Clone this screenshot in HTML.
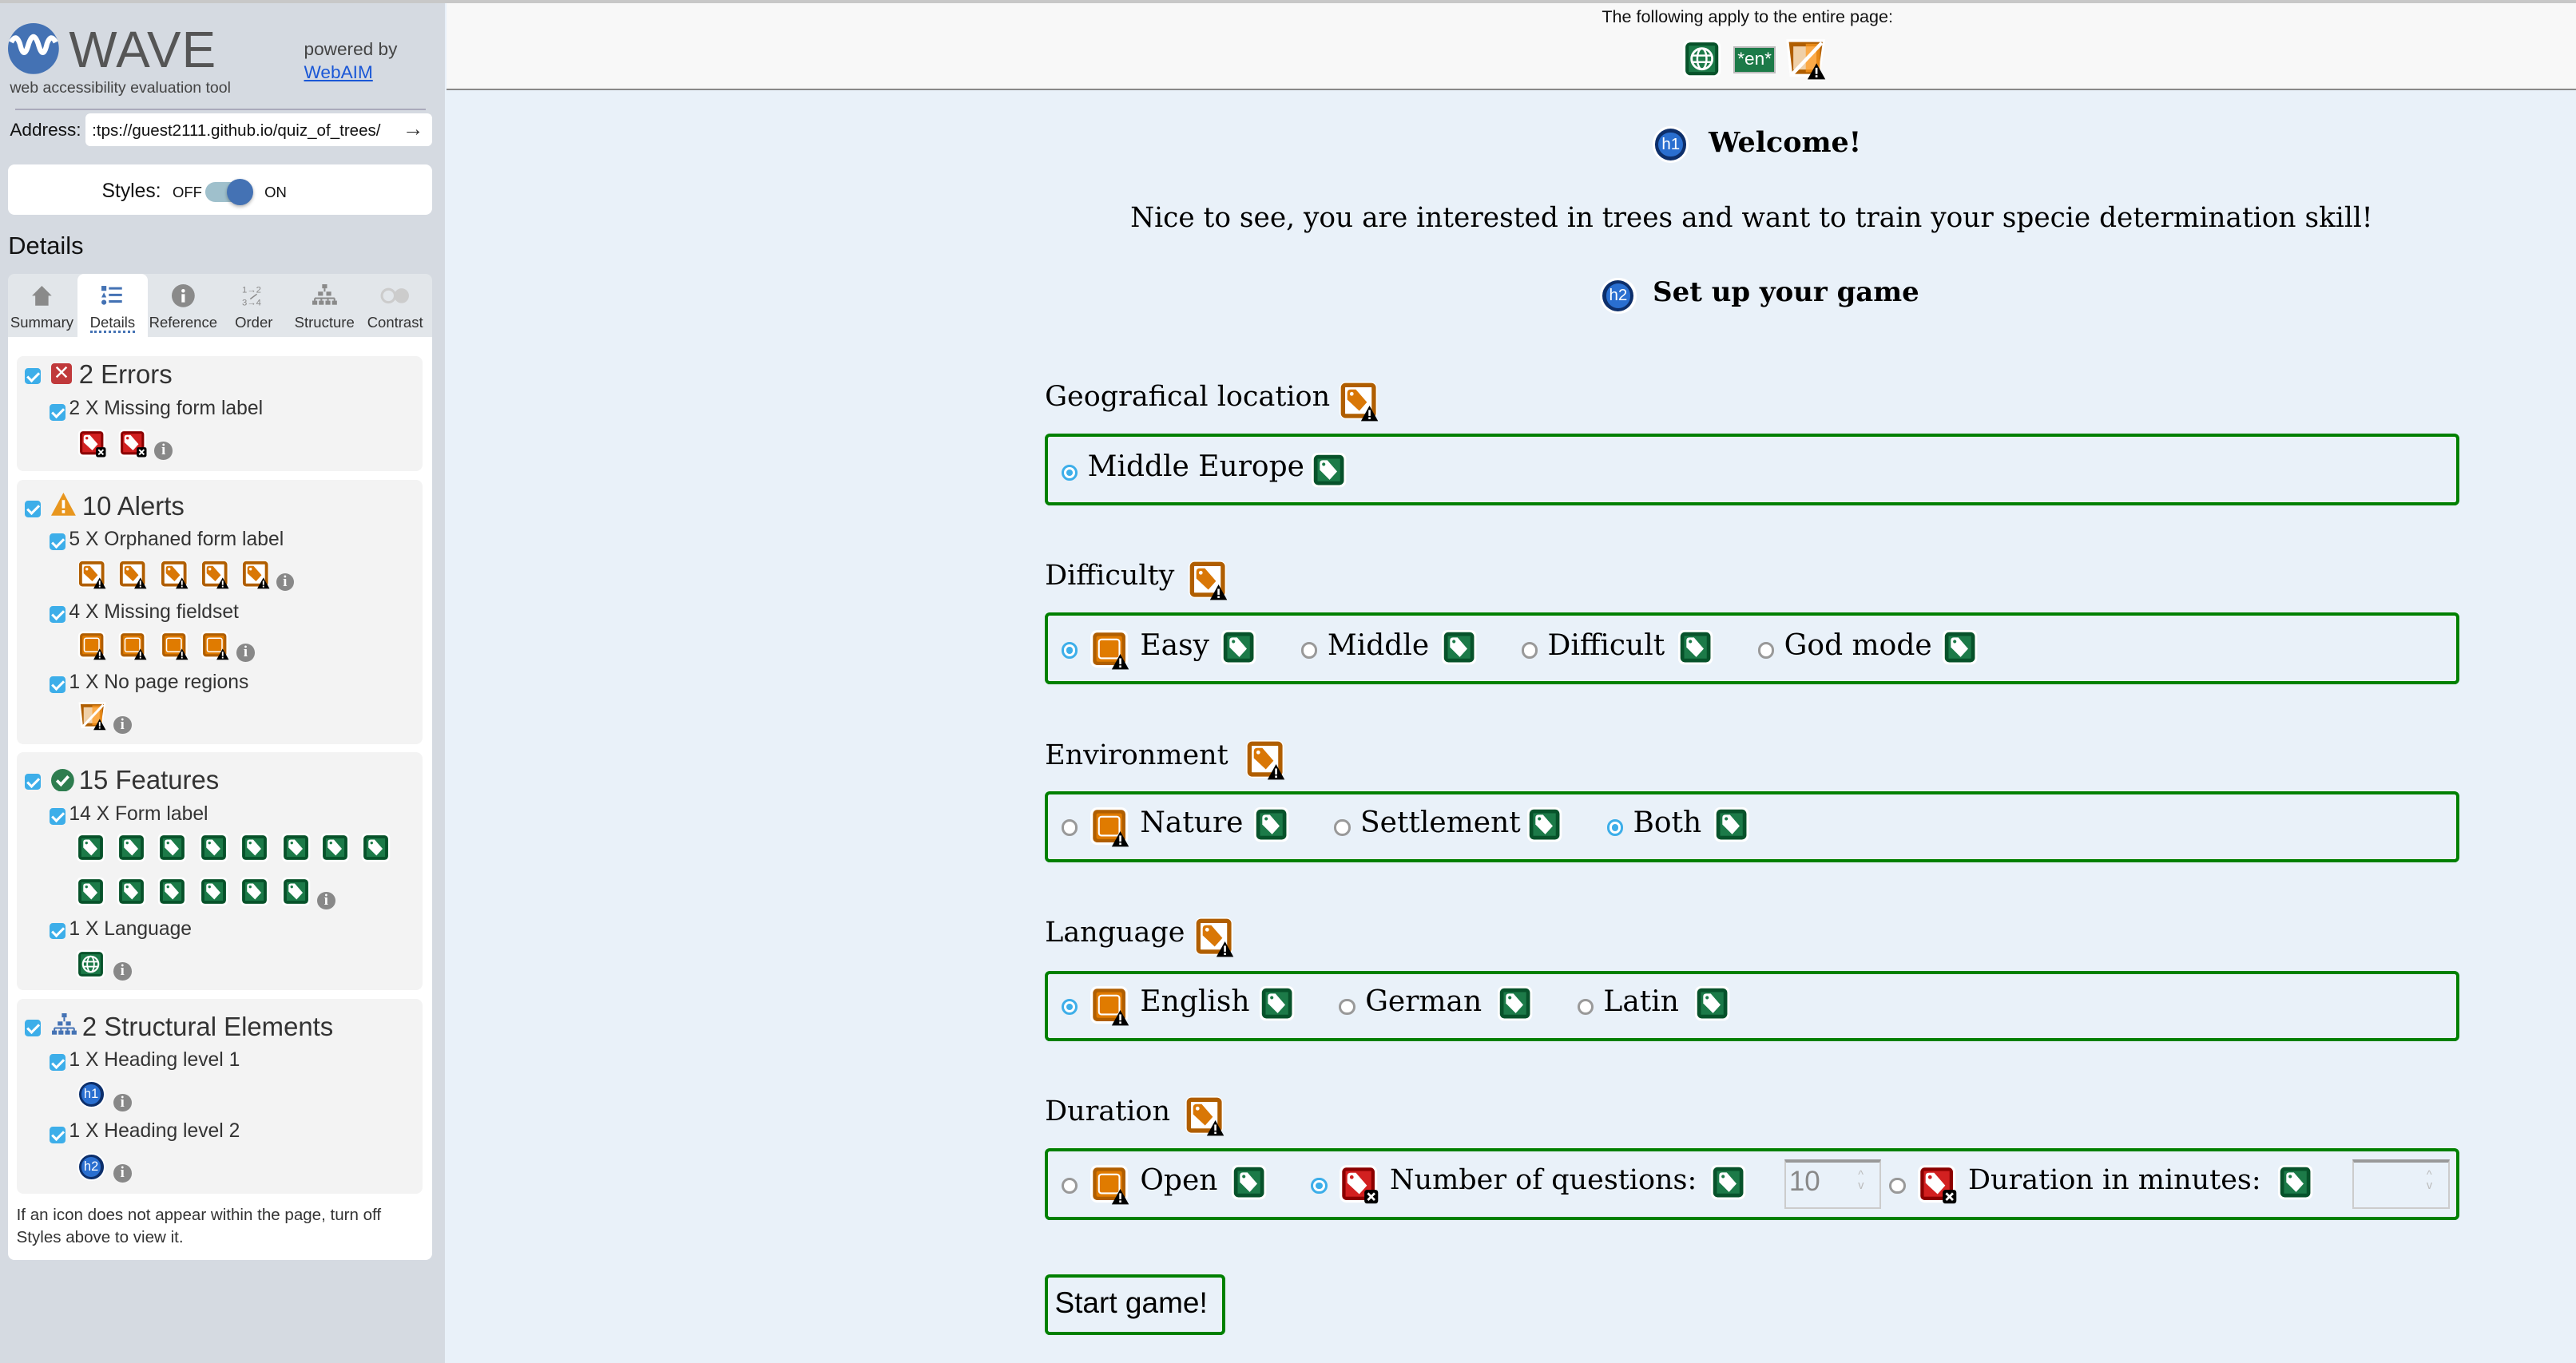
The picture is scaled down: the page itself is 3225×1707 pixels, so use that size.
<!DOCTYPE html>
<html><head><meta charset="utf-8">
<style>
html,body{margin:0;padding:0;}
body{width:1568px;height:830px;zoom:2.0568;overflow:hidden;position:relative;background:#e9f1f9;font-family:"Liberation Sans",sans-serif;}
.a{position:absolute;white-space:nowrap;}
#side{position:absolute;left:0;top:0;width:271px;height:830px;background:#d5dae1;}
#top{position:absolute;left:272px;top:2px;width:1296px;height:52px;background:#f8f8f8;border-bottom:1px solid #888;}
.cb{position:absolute;width:10px;height:10px;background:#3daee9;border-radius:2px;}
.cb:after{content:"";position:absolute;left:3px;top:1px;width:3px;height:6px;border:solid #fff;border-width:0 1.5px 1.5px 0;transform:rotate(45deg);}
.sec{position:absolute;left:10px;width:247px;background:#f3f3f3;border-radius:4px;}
.h{font-size:16px;color:#333;}
.s{font-size:12px;color:#333;}
.ic{position:absolute;width:18px;height:18px;}
.ib{position:absolute;width:22px;height:22px;}
.inf{position:absolute;width:11px;height:11px;border-radius:50%;background:#888;color:#fff;font:bold 9px "Liberation Serif",serif;text-align:center;line-height:11px;}
.ser{font-family:"DejaVu Serif",serif;color:#000;}
.lab{font-size:17px;}
.fs{position:absolute;left:636px;width:857px;border:2px solid #008000;border-radius:3px;}
.r{position:absolute;width:7px;height:7px;border:1.5px solid #999;border-radius:50%;background:#fff;}
.r.on{border-color:#3daee9;}
.r.on:after{content:"";position:absolute;left:1.5px;top:1.5px;width:4px;height:4px;border-radius:50%;background:#3daee9;}
.opt{font-size:17.5px;font-family:"DejaVu Serif",serif;}
.tab{position:absolute;top:167px;width:43px;height:38px;text-align:center;font-size:9px;color:#333;}
.tab svg{display:block;margin:6px auto 0;}
.tab .t{display:block;margin-top:4px;}
</style></head><body>
<svg width="0" height="0" style="position:absolute">
<defs>
<symbol id="tg" viewBox="0 0 24 24"><rect x="0.5" y="0.5" width="23" height="23" rx="4" fill="#fff"/><rect x="2" y="2" width="20" height="20" rx="3" fill="#07522a"/><rect x="4.5" y="4.5" width="15" height="15" fill="#1c7a48"/><path d="M6 7.5 Q6 5.5 8 5.5 H11 L17.5 13 L12.5 18.5 L6 12 Z" fill="#fff"/><circle cx="8.6" cy="8.2" r="1.1" fill="#1c7a48"/></symbol>
<symbol id="to" viewBox="0 0 24 24"><rect x="0.5" y="0.5" width="22" height="22" rx="4" fill="#fff"/><rect x="2.5" y="2.5" width="18" height="18" rx="1.5" fill="#fff" stroke="#b05e00" stroke-width="2.5"/><path d="M5 7 Q5 5 7 5 H10 L16.5 12.5 L12 17.5 L5 11 Z" fill="#d97706"/><circle cx="7.6" cy="7.6" r="1.1" fill="#fff"/><path d="M18 14.5 L23 23.5 H13 Z" fill="#000"/><rect x="17.4" y="17" width="1.2" height="3.5" fill="#fff"/><rect x="17.4" y="21.2" width="1.2" height="1.2" fill="#fff"/></symbol>
<symbol id="fo" viewBox="0 0 24 24"><rect x="0.5" y="0.5" width="22" height="22" rx="4" fill="#fff"/><rect x="2" y="2" width="19" height="19" rx="2.5" fill="#b05e00"/><rect x="4" y="4" width="15" height="15" rx="1" fill="#e07b00"/><rect x="5.5" y="6" width="12" height="11" rx="1.5" fill="none" stroke="#fff" stroke-width="1"/><path d="M18 14.5 L23 23.5 H13 Z" fill="#000"/><rect x="17.4" y="17" width="1.2" height="3.5" fill="#fff"/><rect x="17.4" y="21.2" width="1.2" height="1.2" fill="#fff"/></symbol>
<symbol id="tr" viewBox="0 0 24 24"><rect x="0.5" y="0.5" width="22" height="22" rx="4" fill="#fff"/><rect x="2" y="2" width="19" height="19" rx="2.5" fill="#8b0000"/><rect x="4" y="4" width="15" height="15" fill="#d22020"/><path d="M5 7 Q5 5 7 5 H10 L16.5 12.5 L12 17.5 L5 11 Z" fill="#fff"/><circle cx="7.6" cy="7.6" r="1.1" fill="#d22020"/><rect x="15" y="15" width="8" height="8" rx="1.5" fill="#000"/><path d="M17 17 L21 21 M21 17 L17 21" stroke="#fff" stroke-width="1.3"/></symbol>
<symbol id="rg" viewBox="0 0 24 24"><path d="M1 1 H23 L20 22 H3 Z" fill="#fff"/><path d="M2.5 2.5 H21.5 L19 20.5 H4.5 Z" fill="#b05e00"/><rect x="5" y="5" width="13" height="13" fill="#f0d0a8"/><rect x="12" y="3.5" width="8" height="16" fill="#ff9a20" opacity=".7"/><path d="M21 3 L4 21" stroke="#fff" stroke-width="2"/><path d="M18 14.5 L23 23.5 H13 Z" fill="#000"/><rect x="17.4" y="17" width="1.2" height="3.5" fill="#fff"/><rect x="17.4" y="21.2" width="1.2" height="1.2" fill="#fff"/></symbol>
<symbol id="gl" viewBox="0 0 24 24"><rect x="0.5" y="0.5" width="23" height="23" rx="4" fill="#fff"/><rect x="2" y="2" width="20" height="20" rx="3" fill="#07522a"/><rect x="4" y="4" width="16" height="16" fill="#1c7a48"/><circle cx="12" cy="12" r="6.3" fill="none" stroke="#fff" stroke-width="1.4"/><ellipse cx="12" cy="12" rx="2.8" ry="6.3" fill="none" stroke="#fff" stroke-width="1.2"/><path d="M5.8 10 H18.2 M5.8 14 H18.2" stroke="#fff" stroke-width="1.2"/></symbol>
</defs></svg>

<div id="side">
  <svg class="a" style="left:5px;top:14px" width="31" height="31" viewBox="0 0 32 32"><circle cx="16" cy="16" r="16" fill="#4472b4"/><path d="M2 12 Q5 6 7.5 13 Q10 24 13 13 Q16 4 19 13 Q22 24 24.5 13 Q27 6 30 12" fill="none" stroke="#fff" stroke-width="3.2"/></svg>
  <div class="a" style="left:42px;top:12px;font-size:31px;color:#555;letter-spacing:0.5px;font-weight:300">WAVE</div>
  <div class="a" style="left:6px;top:48px;font-size:9.5px;color:#444">web accessibility evaluation tool</div>
  <div class="a" style="left:185px;top:24px;font-size:11px;color:#444">powered by</div>
  <div class="a" style="left:185px;top:38px;font-size:11px;color:#1a57d6;text-decoration:underline">WebAIM</div>
  <div class="a" style="left:9px;top:66px;width:500px;height:1px;background:#aab;transform-origin:0 0;transform:scaleX(.5)"></div>
  <div class="a" style="left:6px;top:73px;font-size:11px;color:#111">Address:</div>
  <div class="a" style="left:52px;top:69px;width:211px;height:20px;background:#fff;border-radius:3px"></div>
  <div class="a" style="left:56px;top:74px;font-size:10px;color:#111">:tps://guest2111.github.io/quiz_of_trees/</div>
  <div class="a" style="left:245px;top:71px;font-size:13px;color:#333">→</div>
  <div class="a" style="left:5px;top:100px;width:258px;height:31px;background:#fff;border-radius:4px"></div>
  <div class="a" style="left:62px;top:110px;font-size:12px;color:#111">Styles:</div>
  <div class="a" style="left:105px;top:112px;font-size:9px;color:#111">OFF</div>
  <div class="a" style="left:125px;top:111px;width:28px;height:12px;background:#9fc0cc;border-radius:6px"></div>
  <div class="a" style="left:138px;top:109px;width:16px;height:16px;background:#4472b4;border-radius:50%;box-shadow:0 1px 2px rgba(0,0,0,.3)"></div>
  <div class="a" style="left:161px;top:112px;font-size:9px;color:#111">ON</div>
  <div class="a" style="left:5px;top:141px;font-size:15px;color:#111">Details</div>
  <div class="a" style="left:5px;top:167px;width:258px;height:38px;background:#e2e6ea;border-radius:4px 4px 0 0"></div>
  <div class="a" style="left:47px;top:167px;width:43px;height:38px;background:#fff;border-radius:4px 4px 0 0"></div>
  <div class="tab" style="left:4px"><svg width="14" height="14" viewBox="0 0 14 14"><path d="M7 1 L13 7 H11 V13 H3 V7 H1Z" fill="#8a8a8a"/></svg><span class="t">Summary</span></div>
  <div class="tab" style="left:47px"><svg width="14" height="14" viewBox="0 0 14 14"><rect x="0.5" y="1" width="3" height="3" fill="#4472b4"/><path d="M2 5 L3.5 8 H0.5Z" fill="#4472b4"/><circle cx="2" cy="11" r="1.5" fill="#4472b4"/><path d="M5 2.5H13M5 6.5H13M5 10.5H13" stroke="#4472b4" stroke-width="1.5"/></svg><span class="t"><span style="border-bottom:1.5px dotted #4472b4">Details</span></span></div>
  <div class="tab" style="left:90px"><svg width="14" height="14" viewBox="0 0 14 14"><circle cx="7" cy="7" r="7" fill="#8a8a8a"/><rect x="6" y="6" width="2" height="5" fill="#fff"/><circle cx="7" cy="4" r="1.1" fill="#fff"/></svg><span class="t">Reference</span></div>
  <div class="tab" style="left:133px"><svg width="16" height="14" viewBox="0 0 16 14"><text x="1" y="5" font-size="5.5" fill="#888" font-family="Liberation Sans">1→2</text><path d="M10 6 L6 9" stroke="#888" stroke-width=".7"/><text x="1" y="13" font-size="5.5" fill="#888" font-family="Liberation Sans">3→4</text></svg><span class="t">Order</span></div>
  <div class="tab" style="left:176px"><svg width="15" height="14" viewBox="0 0 15 14"><g fill="#8a8a8a"><rect x="6" y="0" width="3" height="2.5"/><rect x="3.5" y="4.5" width="3" height="2.5"/><rect x="8.5" y="4.5" width="3" height="2.5"/><rect x="0" y="10" width="3" height="2.5"/><rect x="4" y="10" width="3" height="2.5"/><rect x="8" y="10" width="3" height="2.5"/><rect x="12" y="10" width="3" height="2.5"/></g><path d="M7.5 2.5V4.5M1.5 8.5H13.5M1.5 8.5V10M13.5 8.5V10M5.5 8.5V10M9.5 8.5V10" stroke="#8a8a8a"/></svg><span class="t">Structure</span></div>
  <div class="tab" style="left:219px"><svg width="18" height="14" viewBox="0 0 18 14"><circle cx="5" cy="7" r="4" fill="none" stroke="#ccc" stroke-width="1.5"/><circle cx="13" cy="7" r="4.5" fill="#ccc"/></svg><span class="t">Contrast</span></div>

  <div class="a" style="left:5px;top:205px;width:258px;height:562px;background:#fff;border-radius:0 0 4px 4px"></div>

  <div class="sec" style="top:217px;height:70px"></div>
  <div class="cb" style="left:15px;top:224px"></div>
  <div class="a" style="left:31px;top:221px;width:13px;height:13px;background:#c0393b;border-radius:2px;color:#fff;font-size:12px;text-align:center;line-height:13px">✕</div>
  <div class="a h" style="left:48px;top:219px">2 Errors</div>
  <div class="cb" style="left:30px;top:246px"></div>
  <div class="a s" style="left:42px;top:242px">2 X Missing form label</div>
  <svg class="ic" style="left:47px;top:261px"><use href="#tr"/></svg>
  <svg class="ic" style="left:72px;top:261px"><use href="#tr"/></svg>
  <div class="inf" style="left:94px;top:269px">i</div>

  <div class="sec" style="top:292px;height:161px"></div>
  <div class="cb" style="left:15px;top:305px"></div>
  <svg class="a" style="left:31px;top:300px" width="15" height="14" viewBox="0 0 15 14"><path d="M7.5 0 L15 14 H0Z" fill="#e8961e"/><rect x="6.6" y="4.5" width="1.8" height="5" fill="#fff"/><rect x="6.6" y="10.7" width="1.8" height="1.8" fill="#fff"/></svg>
  <div class="a h" style="left:50px;top:299px">10 Alerts</div>
  <div class="cb" style="left:30px;top:325px"></div>
  <div class="a s" style="left:42px;top:322px">5 X Orphaned form label</div>
  <svg class="ic" style="left:47px;top:341px"><use href="#to"/></svg>
  <svg class="ic" style="left:72px;top:341px"><use href="#to"/></svg>
  <svg class="ic" style="left:97px;top:341px"><use href="#to"/></svg>
  <svg class="ic" style="left:122px;top:341px"><use href="#to"/></svg>
  <svg class="ic" style="left:147px;top:341px"><use href="#to"/></svg>
  <div class="inf" style="left:168px;top:349px">i</div>
  <div class="cb" style="left:30px;top:369px"></div>
  <div class="a s" style="left:42px;top:366px">4 X Missing fieldset</div>
  <svg class="ic" style="left:47px;top:384px"><use href="#fo"/></svg>
  <svg class="ic" style="left:72px;top:384px"><use href="#fo"/></svg>
  <svg class="ic" style="left:97px;top:384px"><use href="#fo"/></svg>
  <svg class="ic" style="left:122px;top:384px"><use href="#fo"/></svg>
  <div class="inf" style="left:144px;top:392px">i</div>
  <div class="cb" style="left:30px;top:412px"></div>
  <div class="a s" style="left:42px;top:409px">1 X No page regions</div>
  <svg class="ic" style="left:47px;top:427px"><use href="#rg"/></svg>
  <div class="inf" style="left:69px;top:436px">i</div>

  <div class="sec" style="top:458px;height:145px"></div>
  <div class="cb" style="left:15px;top:471px"></div>
  <svg class="a" style="left:31px;top:468px" width="14" height="14" viewBox="0 0 14 14"><circle cx="7" cy="7" r="7" fill="#2e7d4f"/><path d="M3.5 7 L6 9.5 L10.5 4.5" fill="none" stroke="#fff" stroke-width="1.8"/></svg>
  <div class="a h" style="left:48px;top:466px">15 Features</div>
  <div class="cb" style="left:30px;top:492px"></div>
  <div class="a s" style="left:42px;top:489px">14 X Form label</div>
  <svg class="ic" style="left:46px;top:507px"><use href="#tg"/></svg>
  <svg class="ic" style="left:71px;top:507px"><use href="#tg"/></svg>
  <svg class="ic" style="left:96px;top:507px"><use href="#tg"/></svg>
  <svg class="ic" style="left:121px;top:507px"><use href="#tg"/></svg>
  <svg class="ic" style="left:146px;top:507px"><use href="#tg"/></svg>
  <svg class="ic" style="left:171px;top:507px"><use href="#tg"/></svg>
  <svg class="ic" style="left:195px;top:507px"><use href="#tg"/></svg>
  <svg class="ic" style="left:220px;top:507px"><use href="#tg"/></svg>
  <svg class="ic" style="left:46px;top:534px"><use href="#tg"/></svg>
  <svg class="ic" style="left:71px;top:534px"><use href="#tg"/></svg>
  <svg class="ic" style="left:96px;top:534px"><use href="#tg"/></svg>
  <svg class="ic" style="left:121px;top:534px"><use href="#tg"/></svg>
  <svg class="ic" style="left:146px;top:534px"><use href="#tg"/></svg>
  <svg class="ic" style="left:171px;top:534px"><use href="#tg"/></svg>
  <div class="inf" style="left:193px;top:543px">i</div>
  <div class="cb" style="left:30px;top:562px"></div>
  <div class="a s" style="left:42px;top:559px">1 X Language</div>
  <svg class="ic" style="left:46px;top:578px"><use href="#gl"/></svg>
  <div class="inf" style="left:69px;top:586px">i</div>

  <div class="sec" style="top:608px;height:119px"></div>
  <div class="cb" style="left:15px;top:621px"></div>
  <svg class="a" style="left:31px;top:617px" width="16" height="14" viewBox="0 0 15 14"><g fill="#4472b4"><rect x="6" y="0" width="3" height="2.5"/><rect x="3.5" y="5" width="3" height="2.5"/><rect x="8.5" y="5" width="3" height="2.5"/><rect x="0" y="10.5" width="3" height="2.5"/><rect x="4" y="10.5" width="3" height="2.5"/><rect x="8" y="10.5" width="3" height="2.5"/><rect x="12" y="10.5" width="3" height="2.5"/></g><path d="M7.5 2.5V5M1.5 9H13.5M1.5 9V10.5M13.5 9V10.5M5.5 9V10.5M9.5 9V10.5" stroke="#4472b4"/></svg>
  <div class="a h" style="left:50px;top:616px">2 Structural Elements</div>
  <div class="cb" style="left:30px;top:642px"></div>
  <div class="a s" style="left:42px;top:639px">1 X Heading level 1</div>
  <div class="a" style="left:47px;top:658px;width:15px;height:15px;border-radius:50%;background:#0d2f6b;border:1px solid #fff"><div style="margin:1.5px;width:12px;height:12px;border-radius:50%;background:#2a6fd0;color:#fff;font-size:8px;text-align:center;line-height:12px">h1</div></div>
  <div class="inf" style="left:69px;top:666px">i</div>
  <div class="cb" style="left:30px;top:686px"></div>
  <div class="a s" style="left:42px;top:682px">1 X Heading level 2</div>
  <div class="a" style="left:47px;top:702px;width:15px;height:15px;border-radius:50%;background:#0d2f6b;border:1px solid #fff"><div style="margin:1.5px;width:12px;height:12px;border-radius:50%;background:#2a6fd0;color:#fff;font-size:8px;text-align:center;line-height:12px">h2</div></div>
  <div class="inf" style="left:69px;top:709px">i</div>
  <div class="a" style="left:10px;top:733px;font-size:10px;color:#333;line-height:14px;white-space:normal;width:250px">If an icon does not appear within the page, turn off Styles above to view it.</div>
</div>

<div class="a" style="left:0;top:0;width:1568px;height:2px;background:#c8c8c8"></div>
<div id="top"></div>
<div class="a" style="left:975px;top:4px;font-size:10.5px;color:#111">The following apply to the entire page:</div>
<svg class="ib" style="left:1024px;top:24px;width:24px;height:24px"><use href="#gl"/></svg>
<div class="a" style="left:1055px;top:28px;width:24px;height:15px;background:#1c7a48;border:1px solid #bbb;color:#fff;font-size:11px;text-align:center;line-height:14px">*en*</div>
<svg class="ib" style="left:1086px;top:23px;width:26px;height:26px"><use href="#rg"/></svg>

<div class="a" style="left:1006px;top:77px;width:22px;height:22px;border-radius:50%;background:#fff"><div style="margin:1.5px;width:19px;height:19px;border-radius:50%;background:#0d2f6b"><div style="position:relative;top:2px;left:2px;width:15px;height:15px;border-radius:50%;background:#2a6fd0;color:#fff;font-size:10px;text-align:center;line-height:15px">h1</div></div></div>
<div class="a ser" style="left:1040px;top:77px;font-size:17px;font-weight:bold">Welcome!</div>
<div class="a ser" style="left:688px;top:123px;font-size:16.7px">Nice to see, you are interested in trees and want to train your specie determination skill!</div>
<div class="a" style="left:974px;top:169px;width:22px;height:22px;border-radius:50%;background:#fff"><div style="margin:1.5px;width:19px;height:19px;border-radius:50%;background:#0d2f6b"><div style="position:relative;top:2px;left:2px;width:15px;height:15px;border-radius:50%;background:#2a6fd0;color:#fff;font-size:10px;text-align:center;line-height:15px">h2</div></div></div>
<div class="a ser" style="left:1006px;top:168px;font-size:16.5px;font-weight:bold">Set up your game</div>

<div class="a ser lab" style="left:636px;top:232px">Geografical location</div>
<svg class="ib" style="left:815px;top:232px;width:25px;height:25px"><use href="#to"/></svg>
<div class="fs" style="top:264px;height:40px"></div>
<div class="r on" style="left:646px;top:283px"></div>
<div class="a opt" style="left:662px;top:274px">Middle Europe</div>
<svg class="ib" style="left:798px;top:275px"><use href="#tg"/></svg>

<div class="a ser lab" style="left:636px;top:341px">Difficulty</div>
<svg class="ib" style="left:723px;top:341px;width:25px;height:25px"><use href="#to"/></svg>
<div class="fs" style="top:373px;height:40px"></div>
<div class="r on" style="left:646px;top:391px"></div>
<svg class="ib" style="left:663px;top:383px;width:25px;height:25px"><use href="#fo"/></svg>
<div class="a opt" style="left:694px;top:383px">Easy</div>
<svg class="ib" style="left:743px;top:383px"><use href="#tg"/></svg>
<div class="r" style="left:792px;top:391px"></div>
<div class="a opt" style="left:808px;top:383px">Middle</div>
<svg class="ib" style="left:877px;top:383px"><use href="#tg"/></svg>
<div class="r" style="left:926px;top:391px"></div>
<div class="a opt" style="left:942px;top:383px">Difficult</div>
<svg class="ib" style="left:1021px;top:383px"><use href="#tg"/></svg>
<div class="r" style="left:1070px;top:391px"></div>
<div class="a opt" style="left:1086px;top:383px">God mode</div>
<svg class="ib" style="left:1182px;top:383px"><use href="#tg"/></svg>

<div class="a ser lab" style="left:636px;top:450px">Environment</div>
<svg class="ib" style="left:758px;top:450px;width:25px;height:25px"><use href="#to"/></svg>
<div class="fs" style="top:482px;height:39px"></div>
<div class="r" style="left:646px;top:499px"></div>
<svg class="ib" style="left:663px;top:491px;width:25px;height:25px"><use href="#fo"/></svg>
<div class="a opt" style="left:694px;top:491px">Nature</div>
<svg class="ib" style="left:763px;top:491px"><use href="#tg"/></svg>
<div class="r" style="left:812px;top:499px"></div>
<div class="a opt" style="left:828px;top:491px">Settlement</div>
<svg class="ib" style="left:929px;top:491px"><use href="#tg"/></svg>
<div class="r on" style="left:978px;top:499px"></div>
<div class="a opt" style="left:994px;top:491px">Both</div>
<svg class="ib" style="left:1043px;top:491px"><use href="#tg"/></svg>

<div class="a ser lab" style="left:636px;top:558px">Language</div>
<svg class="ib" style="left:727px;top:558px;width:25px;height:25px"><use href="#to"/></svg>
<div class="fs" style="top:591px;height:39px"></div>
<div class="r on" style="left:646px;top:608px"></div>
<svg class="ib" style="left:663px;top:600px;width:25px;height:25px"><use href="#fo"/></svg>
<div class="a opt" style="left:694px;top:600px">English</div>
<svg class="ib" style="left:766px;top:600px"><use href="#tg"/></svg>
<div class="r" style="left:815px;top:608px"></div>
<div class="a opt" style="left:831px;top:600px">German</div>
<svg class="ib" style="left:911px;top:600px"><use href="#tg"/></svg>
<div class="r" style="left:960px;top:608px"></div>
<div class="a opt" style="left:976px;top:600px">Latin</div>
<svg class="ib" style="left:1031px;top:600px"><use href="#tg"/></svg>

<div class="a ser lab" style="left:636px;top:667px">Duration</div>
<svg class="ib" style="left:721px;top:667px;width:25px;height:25px"><use href="#to"/></svg>
<div class="fs" style="top:699px;height:40px"></div>
<div class="r" style="left:646px;top:717px"></div>
<svg class="ib" style="left:663px;top:709px;width:25px;height:25px"><use href="#fo"/></svg>
<div class="a opt" style="left:694px;top:709px">Open</div>
<svg class="ib" style="left:749px;top:709px"><use href="#tg"/></svg>
<div class="r on" style="left:798px;top:717px"></div>
<svg class="ib" style="left:815px;top:709px;width:25px;height:25px"><use href="#tr"/></svg>
<div class="a opt" style="left:846px;top:709px;font-size:17px">Number of questions:</div>
<svg class="ib" style="left:1041px;top:709px"><use href="#tg"/></svg>
<div class="a" style="left:1086px;top:706px;width:57px;height:27px;background:#e9f1f9;border:1px solid #ccc;border-top:2px solid #999"></div>
<div class="a" style="left:1089px;top:710px;font-size:17px;color:#888">10</div>
<div class="a" style="left:1131px;top:713px;font-size:7px;color:#bbb;line-height:6px">^<br>v</div>
<div class="r" style="left:1150px;top:717px"></div>
<svg class="ib" style="left:1167px;top:709px;width:25px;height:25px"><use href="#tr"/></svg>
<div class="a opt" style="left:1198px;top:709px;font-size:17px">Duration in minutes:</div>
<svg class="ib" style="left:1386px;top:709px"><use href="#tg"/></svg>
<div class="a" style="left:1432px;top:706px;width:57px;height:27px;background:#e9f1f9;border:1px solid #ccc;border-top:2px solid #999"></div>
<div class="a" style="left:1477px;top:713px;font-size:7px;color:#bbb;line-height:6px">^<br>v</div>

<div class="a" style="left:636px;top:776px;width:106px;height:33px;border:2px solid #008000;border-radius:3px"></div>
<div class="a" style="left:642px;top:783px;font-size:18px;color:#000">Start game!</div>
</body></html>
